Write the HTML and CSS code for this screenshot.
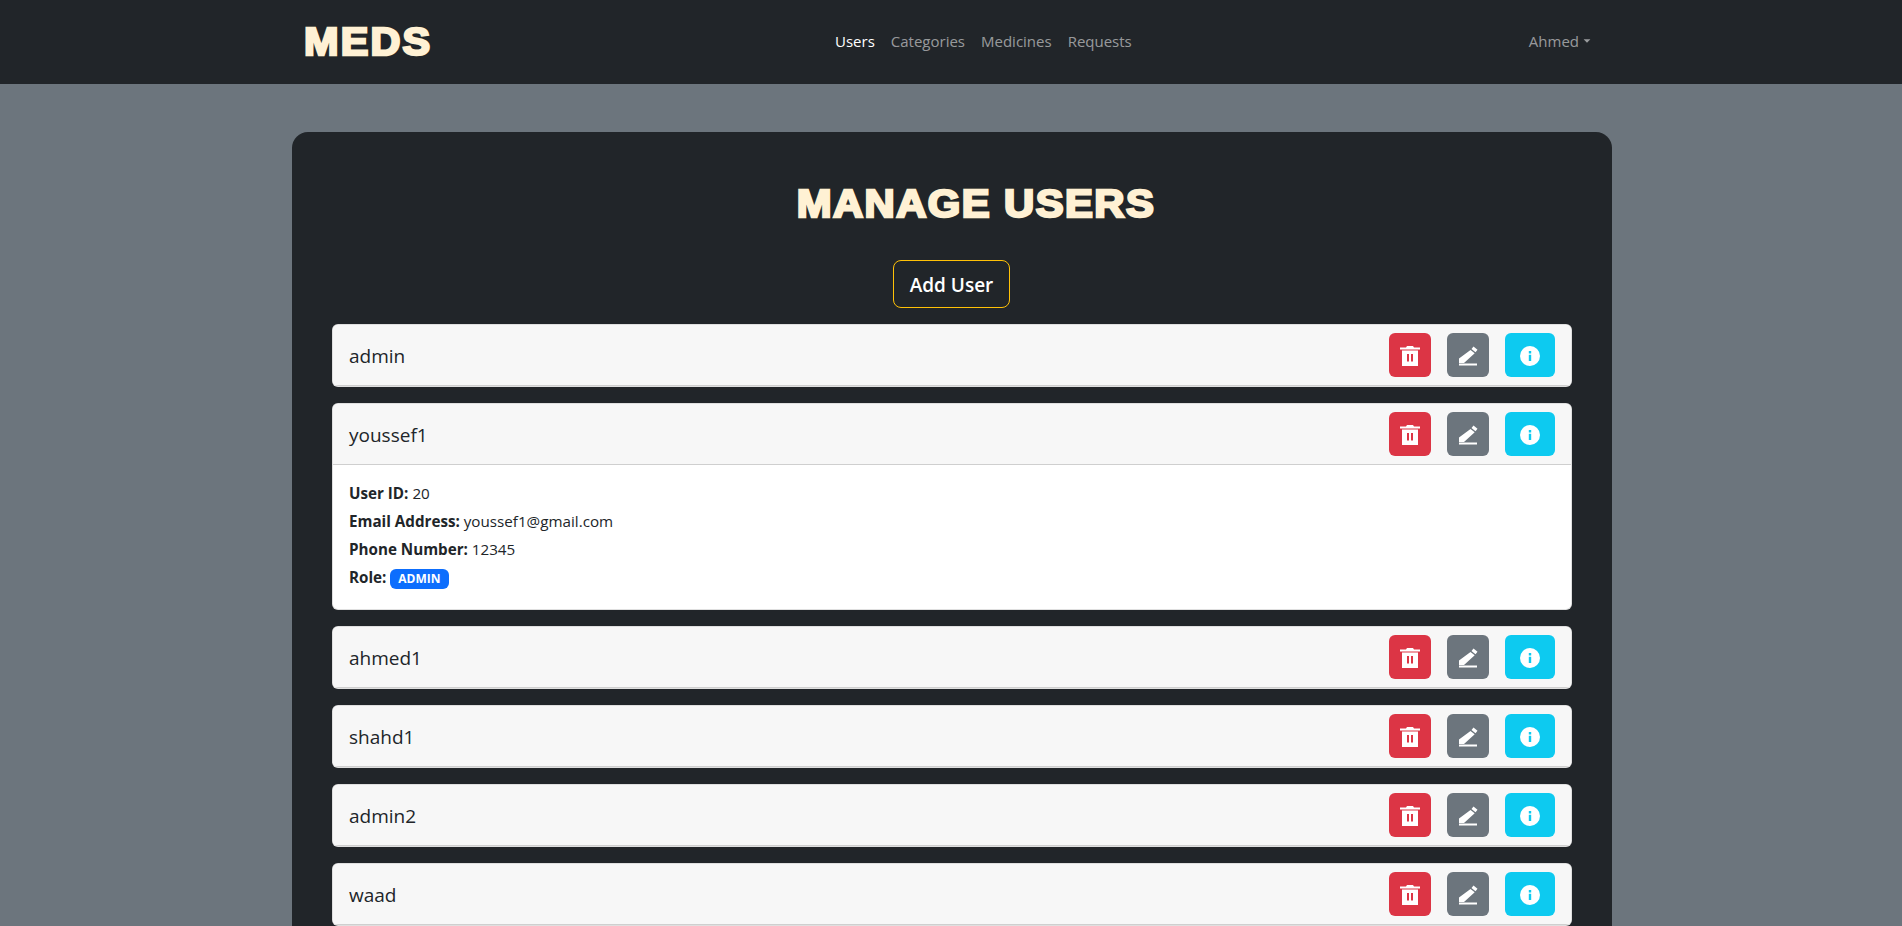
FILE: index.html
```html
<!DOCTYPE html>
<html lang="en">
<head>
<meta charset="utf-8">
<title>Manage Users</title>
<link rel="stylesheet" href="styles.css">
</head>
<body>
<svg class="sprite" width="0" height="0" aria-hidden="true">
  <symbol id="i-trash" viewBox="0 0 20 20">
    <path fill="currentColor" fill-rule="evenodd" d="M7 0h6l1 1.500h6v2H0v-2h6zM2 4.500h16V20H2zM7 8v7.500h2V8zM11 8v7.500h2V8z"/>
  </symbol>
  <symbol id="i-pen" viewBox="0 0 20 20">
    <path fill="currentColor" d="M13.500 3L15.500 .500l4 3.300-2 2.500zM12.500 4l4.200 3.300L6 17H1v-4.500zM1 17.500h18v2H1z"/>
  </symbol>
  <symbol id="i-info" viewBox="0 0 20 20">
    <path fill="currentColor" fill-rule="evenodd" d="M10 0a10 10 0 1 0 0 20a10 10 0 0 0 0-20zM8.800 5h2.400v2.400H8.800zM8.800 8.700h2.400v6.300H8.800z"/>
  </symbol>
</svg>

<nav class="navbar">
  <div class="nav-inner">
    <a class="brand"><span class="wide-left">MEDS</span></a>
    <ul class="nav-links">
      <li class="active">Users</li>
      <li>Categories</li>
      <li>Medicines</li>
      <li>Requests</li>
    </ul>
    <div class="nav-user">Ahmed<span class="caret"></span></div>
  </div>
</nav>

<main class="panel">
  <h1 class="title"><span class="wide">MANAGE USERS</span></h1>
  <div class="add-wrap"><button class="add-btn">Add User</button></div>
  <div class="list">
    <section class="card">
      <header class="card-head"><span class="name">admin</span>
        <div class="actions">
          <button class="btn red"><svg><use href="#i-trash"/></svg></button>
          <button class="btn gray"><svg><use href="#i-pen"/></svg></button>
          <button class="btn cyan"><svg><use href="#i-info"/></svg></button>
        </div>
      </header>
    </section>
    <section class="card">
      <header class="card-head open"><span class="name">youssef1</span>
        <div class="actions">
          <button class="btn red"><svg><use href="#i-trash"/></svg></button>
          <button class="btn gray"><svg><use href="#i-pen"/></svg></button>
          <button class="btn cyan"><svg><use href="#i-info"/></svg></button>
        </div>
      </header>
      <div class="card-body">
        <p><b>User ID:</b> 20</p>
        <p><b>Email Address:</b> youssef1@gmail.com</p>
        <p><b>Phone Number:</b> 12345</p>
        <p><b>Role:</b> <span class="badge">ADMIN</span></p>
      </div>
    </section>
    <section class="card">
      <header class="card-head"><span class="name">ahmed1</span>
        <div class="actions">
          <button class="btn red"><svg><use href="#i-trash"/></svg></button>
          <button class="btn gray"><svg><use href="#i-pen"/></svg></button>
          <button class="btn cyan"><svg><use href="#i-info"/></svg></button>
        </div>
      </header>
    </section>
    <section class="card">
      <header class="card-head"><span class="name">shahd1</span>
        <div class="actions">
          <button class="btn red"><svg><use href="#i-trash"/></svg></button>
          <button class="btn gray"><svg><use href="#i-pen"/></svg></button>
          <button class="btn cyan"><svg><use href="#i-info"/></svg></button>
        </div>
      </header>
    </section>
    <section class="card">
      <header class="card-head"><span class="name">admin2</span>
        <div class="actions">
          <button class="btn red"><svg><use href="#i-trash"/></svg></button>
          <button class="btn gray"><svg><use href="#i-pen"/></svg></button>
          <button class="btn cyan"><svg><use href="#i-info"/></svg></button>
        </div>
      </header>
    </section>
    <section class="card">
      <header class="card-head"><span class="name">waad</span>
        <div class="actions">
          <button class="btn red"><svg><use href="#i-trash"/></svg></button>
          <button class="btn gray"><svg><use href="#i-pen"/></svg></button>
          <button class="btn cyan"><svg><use href="#i-info"/></svg></button>
        </div>
      </header>
    </section>
  </div>
</main>
</body>
</html>
```

FILE: styles.css
```css
* { box-sizing: border-box; }
html, body { margin: 0; padding: 0; height: 926px; overflow: hidden; }
body {
  background: #6c757d;
  color: #212529;
  font-family: "Open Sans", "Noto Sans", sans-serif;
  font-size: 16px;
}
.sprite { position: absolute; }
.navbar { background: #212529; height: 84px; }
.nav-inner {
  width: 1320px;
  margin-left: 292px;
  height: 84px;
  padding: 0 12px;
  display: grid;
  grid-template-columns: 531px auto 1fr;
  align-items: center;
}
.brand {
  color: #fff1d4;
  font-family: "Liberation Sans", Arial, sans-serif;
  font-weight: 700;
  font-size: 38px;
  line-height: 46px;
  -webkit-text-stroke: 2.400px #fff1d4;
  letter-spacing: 2px;
}
.wide-left {
  display: inline-block;
  transform: scaleX(1.09);
  transform-origin: left center;
}
.nav-links {
  list-style: none;
  display: flex;
  gap: 16px;
  margin: -2px 0 0;
  padding: 0;
  color: rgba(255, 255, 255, 0.55);
  font-size: 15px;
}
.nav-links .active { color: #fff; }
.nav-user {
  justify-self: end;
  padding-right: 9px;
  margin-top: -2px;
  color: rgba(255, 255, 255, 0.55);
  font-size: 15px;
  display: flex;
  align-items: center;
}
.caret {
  margin-left: 4px;
  border-top: 4.800px solid currentColor;
  border-left: 4.800px solid transparent;
  border-right: 4.800px solid transparent;
  transform: scale(0.85);
}
.panel {
  width: 1320px;
  margin: 48px 0 0 292px;
  padding: 48px 40px 40px;
  background: #212529;
  border-radius: 16px;
  min-height: 900px;
}
.title {
  margin: 0 0 32px;
  padding-left: 48px;
  text-align: center;
  color: #fff1d4;
  font-family: "Liberation Sans", Arial, sans-serif;
  font-weight: 700;
  font-size: 38px;
  line-height: 48px;
  letter-spacing: 1.300px;
  -webkit-text-stroke: 2.400px #fff1d4;
}
.wide {
  display: inline-block;
  transform: scaleX(1.1);
}
.add-wrap { display: flex; justify-content: center; margin-bottom: 16px; padding-right: 1px; }
.add-btn {
  width: 117px;
  height: 48px;
  padding: 2px 0 0;
  background: transparent;
  border: 1px solid #ffc107;
  border-radius: 8px;
  color: #fff;
  font-family: inherit;
  font-size: 19px;
  font-weight: 600;
}
.list { display: flex; flex-direction: column; gap: 16px; }
.card {
  background: #fff;
  border: 1px solid rgba(0, 0, 0, 0.125);
  border-radius: 6px;
  overflow: hidden;
}
.card-head {
  height: 61px;
  background: #f7f7f7;
  padding: 0 16px;
  display: flex;
  align-items: center;
  justify-content: space-between;
  border-bottom: 1px solid #cfcfcf;
}
.name { font-size: 19px; padding-top: 2px; }
.actions { display: flex; gap: 16px; }
.btn {
  width: 42px;
  height: 44px;
  border: 0;
  border-radius: 6px;
  color: #fff;
  display: flex;
  align-items: center;
  justify-content: center;
  padding: 2px 0 0;
}
.btn svg { width: 20px; height: 20px; }
.red { background: #dc3545; }
.gray { background: #6c757d; }
.cyan { background: #0dcaf0; width: 50px; }
.card-body { padding: 14px 16px 18px; font-size: 15.200px; }
.card-body p { margin: 0; height: 28px; line-height: 28px; }
.badge {
  display: inline-block;
  background: #0d6efd;
  color: #fff;
  font-size: 12px;
  font-weight: 700;
  line-height: 12px;
  padding: 4px 8px;
  border-radius: 6px;
}
```
